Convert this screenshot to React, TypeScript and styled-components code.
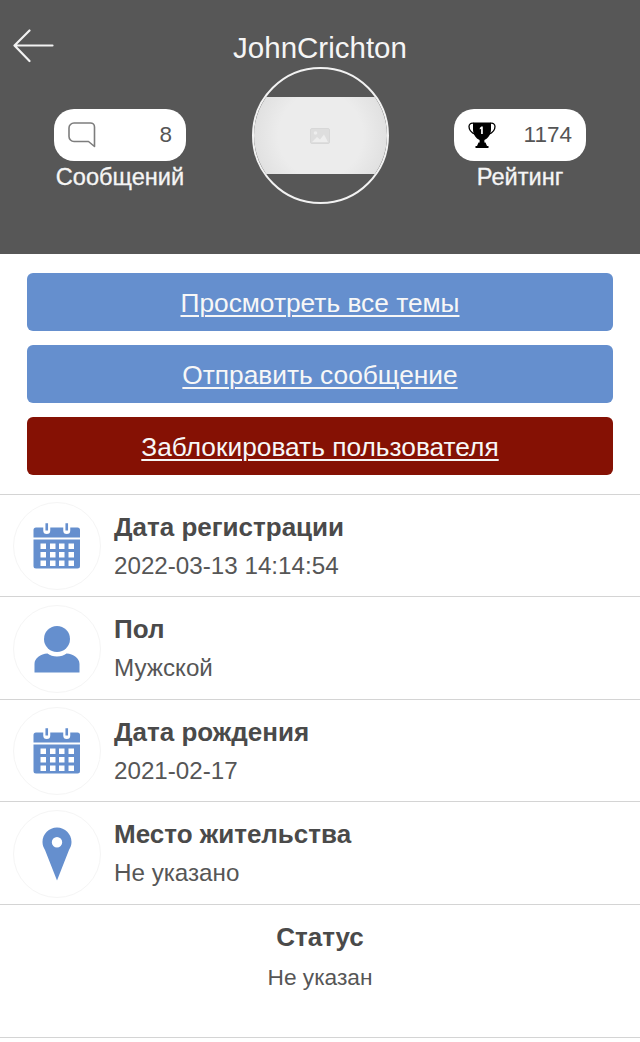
import React, { FC } from 'react'
import styled, { createGlobalStyle } from 'styled-components'

const GlobalStyle = createGlobalStyle`
  html, body {
    margin: 0;
    padding: 0;
    background: #fff;
    font-family: "Liberation Sans", Arial, sans-serif;
  }
  * { box-sizing: border-box; }
`

const BLUE = '#658fce'

const BackIcon = () => (
  <svg width="42" height="34" viewBox="0 0 42 34" fill="none" stroke="#f2f2f2" strokeWidth="2.2" strokeLinecap="round" strokeLinejoin="round">
    <path d="M39.500 16.500H2M16.500 1.500 1.500 16.500l15 15.500" />
  </svg>
)

const ChatIcon = () => (
  <svg width="28" height="26" viewBox="0 0 28 26" fill="none" stroke="#7d7d7d" strokeWidth="1.6" strokeLinejoin="round">
    <path d="M6 1h16.500a4 4 0 0 1 4 4v19.500l-6-5H6a5 5 0 0 1-5-5V6a5 5 0 0 1 5-5Z" />
  </svg>
)

const TrophyIcon = () => (
  <svg width="28" height="28" viewBox="0 0 28 28">
    <path d="M5 1.500h18v7c0 5-3 9-6.600 10.400v3h-4.800v-3C8 17.500 5 13.500 5 8.500Z" fill="#000" />
    <path d="M6 2.500C3 1.500 1 3 1 5.500c0 3.500 3 6.500 6.500 8M22 2.500c3-1 5 .5 5 3 0 3.500-3 6.500-6.500 8" fill="none" stroke="#000" strokeWidth="1.300" />
    <path d="M10.500 21.500h7l1.500 3.500h1.500v2H7.500v-2H9Z" fill="#000" />
    <path d="M14.800 5.500v7.500h-1.700V7.800l-1.300.8V7l1.500-1.500Z" fill="#fff" />
  </svg>
)

const CalendarIcon = () => (
  <svg width="48" height="48" viewBox="0 0 48 48">
    <path fill={BLUE} d="M3 5.500h7.250v3a3.500 3.500 0 0 0 7 0v-3h13v3a3.500 3.500 0 0 0 7 0v-3H44.500a2.500 2.500 0 0 1 2.500 2.500v7.500H.500V8a2.500 2.500 0 0 1 2.500-2.500Z" />
    <path fill={BLUE} d="M12.450 1.200h2.600v7.300h-2.600zM32.450 1.200h2.600v7.300h-2.600z" />
    <path fill={BLUE} fillRule="evenodd" d="M.500 17.500h46.500V44a2.500 2.500 0 0 1-2.500 2.500H3A2.500 2.500 0 0 1 .500 44ZM7.500 21.500v5.500h5.500v-5.500Zm9.500 0v5.500h5.500v-5.500Zm9 0v5.500h5.500v-5.500Zm9.500 0v5.500H41v-5.500Zm-28 8.500v5.500h5.500V30Zm9.500 0v5.500h5.500V30Zm9 0v5.500h5.500V30Zm9.500 0v5.500H41V30Zm-28 8.500V44h5.500v-5.500Zm9.500 0V44h5.500v-5.500Zm9 0V44h5.500v-5.500Zm9.500 0V44H41v-5.500Z" />
  </svg>
)

const PersonIcon = () => (
  <svg width="46" height="48" viewBox="0 0 46 48">
    <circle cx="23" cy="14" r="13" fill={BLUE} />
    <path fill={BLUE} d="M0.500 47.500V39c0-6 6-10 13-10.500 2.500 2 5.500 3 9.500 3s7-1 9.500-3c7 .5 13 4.500 13 10.500v8.500Z" />
  </svg>
)

const PinIcon = () => (
  <svg width="30" height="54" viewBox="0 0 30 54">
    <path fill={BLUE} fillRule="evenodd" d="M15 .500C7 .500.500 7 .500 15c0 3 1 5.500 2.500 8L15 53.500 27 23c1.500-2.500 2.500-5 2.500-8C29.500 7 23 .500 15 .500Zm0 9.500a5.200 5.200 0 1 1 0 10.400 5.200 5.200 0 0 1 0-10.400Z" />
  </svg>
)

const PictureIcon = () => (
  <svg width="20" height="16" viewBox="0 0 20 16">
    <rect x="0.500" y="0.500" width="19" height="15" rx="1.500" fill="#dedede" stroke="#d8d8d8" />
    <circle cx="5.500" cy="5" r="1.800" fill="#eeeeee" />
    <path d="M2 14l5-5 3 2.500 4-5 4 7.500Z" fill="#eeeeee" />
  </svg>
)

const Stat: FC<{ icon: React.ReactNode; value: string; label: string }> = ({ icon, value, label }) => (
  <StatBox>
    <StatPill>
      {icon}
      <StatValue>{value}</StatValue>
    </StatPill>
    <StatLabel>{label}</StatLabel>
  </StatBox>
)

const InfoRow: FC<{ icon: React.ReactNode; title: string; value: string }> = ({ icon, title, value }) => (
  <Row>
    <IconCircle>{icon}</IconCircle>
    <RowText>
      <RowTitle>{title}</RowTitle>
      <RowValue>{value}</RowValue>
    </RowText>
  </Row>
)

const App: FC = () => (
  <Page>
    <GlobalStyle />
    <Header>
      <BackButton>
        <BackIcon />
      </BackButton>
      <UserName>JohnCrichton</UserName>
      <HeaderStats>
        <Stat icon={<ChatIcon />} value="8" label="Сообщений" />
        <Avatar>
          <AvatarBand>
            <PictureIcon />
          </AvatarBand>
        </Avatar>
        <Stat icon={<TrophyIcon />} value="1174" label="Рейтинг" />
      </HeaderStats>
    </Header>
    <Actions>
      <ActionButton href="#">Просмотреть все темы</ActionButton>
      <ActionButton href="#">Отправить сообщение</ActionButton>
      <ActionButton href="#" $danger>
        Заблокировать пользователя
      </ActionButton>
    </Actions>
    <InfoRow icon={<CalendarIcon />} title="Дата регистрации" value="2022-03-13 14:14:54" />
    <InfoRow icon={<PersonIcon />} title="Пол" value="Мужской" />
    <InfoRow icon={<CalendarIcon />} title="Дата рождения" value="2021-02-17" />
    <InfoRow icon={<PinIcon />} title="Место жительства" value="Не указано" />
    <StatusBlock>
      <RowTitle>Статус</RowTitle>
      <StatusValue>Не указан</StatusValue>
    </StatusBlock>
  </Page>
)

const Page = styled.div`
  width: 640px;
  height: 1042px;
  overflow: hidden;
  background: #fff;
  color: #4d4d4d;
`

const Header = styled.header`
  position: relative;
  height: 254px;
  background: #575757;
  padding-top: 31px;
  display: flex;
  flex-direction: column;
  align-items: center;
`

const BackButton = styled.div`
  position: absolute;
  left: 13px;
  top: 29px;
  line-height: 0;
`

const UserName = styled.div`
  font-size: 29.500px;
  line-height: 34px;
  color: #f5f5f5;
`

const HeaderStats = styled.div`
  width: 100%;
  margin-top: 2px;
  padding: 0 54px;
  display: flex;
  justify-content: space-between;
  align-items: flex-start;
`

const StatBox = styled.div`
  width: 132px;
  margin-top: 42px;
  display: flex;
  flex-direction: column;
  align-items: center;
`

const StatPill = styled.div`
  width: 132px;
  height: 52px;
  border-radius: 20px;
  background: #fff;
  padding: 0 14px;
  display: flex;
  align-items: center;
  justify-content: space-between;
`

const StatValue = styled.span`
  font-size: 22.500px;
  color: #555;
`

const StatLabel = styled.div`
  margin-top: 2px;
  font-size: 23.600px;
  line-height: 28px;
  color: #f5f5f5;
  -webkit-text-stroke: 0.3px #f5f5f5;
`

const Avatar = styled.div`
  width: 137px;
  height: 137px;
  border-radius: 50%;
  border: 2px solid #f2f2f2;
  background: #575757;
  overflow: hidden;
  display: flex;
  align-items: center;
`

const AvatarBand = styled.div`
  width: 100%;
  height: 77px;
  background: radial-gradient(circle, #ececec 55%, #dcdcdc 100%);
  display: flex;
  align-items: center;
  justify-content: center;
`

const Actions = styled.div`
  padding: 19px 27px 18.500px;
  display: flex;
  flex-direction: column;
  gap: 14px;
  border-bottom: 1.500px solid #d4d4d4;
`

const ActionButton = styled.a<{ $danger?: boolean }>`
  height: 58px;
  padding-top: 2px;
  border-radius: 6px;
  background: ${(p) => (p.$danger ? '#851104' : BLUE)};
  color: #f7f7f7;
  font-size: 26.300px;
  display: flex;
  align-items: center;
  justify-content: center;
  text-decoration: underline;
  text-decoration-thickness: 2px;
  text-underline-offset: 3px;
`

const Row = styled.div`
  height: 102.500px;
  padding: 2px 0 0 13px;
  display: flex;
  align-items: center;
  gap: 13px;
  border-bottom: 1.500px solid #d4d4d4;
`

const IconCircle = styled.div`
  width: 88px;
  height: 88px;
  flex: none;
  border-radius: 50%;
  border: 1px solid #f5f5f5;
  display: flex;
  align-items: center;
  justify-content: center;
`

const RowText = styled.div`
  display: flex;
  flex-direction: column;
  gap: 9px;
`

const RowTitle = styled.div`
  font-size: 26px;
  line-height: 30px;
  font-weight: 700;
  color: #4a4a4a;
`

const RowValue = styled.div`
  font-size: 24.200px;
  line-height: 30px;
  color: #565656;
`

const StatusValue = styled(RowValue)`
  font-size: 22.700px;
`

const StatusBlock = styled.div`
  height: 133px;
  padding-top: 17px;
  display: flex;
  flex-direction: column;
  align-items: center;
  gap: 10px;
  border-bottom: 1.500px solid #d4d4d4;
`

export default App
